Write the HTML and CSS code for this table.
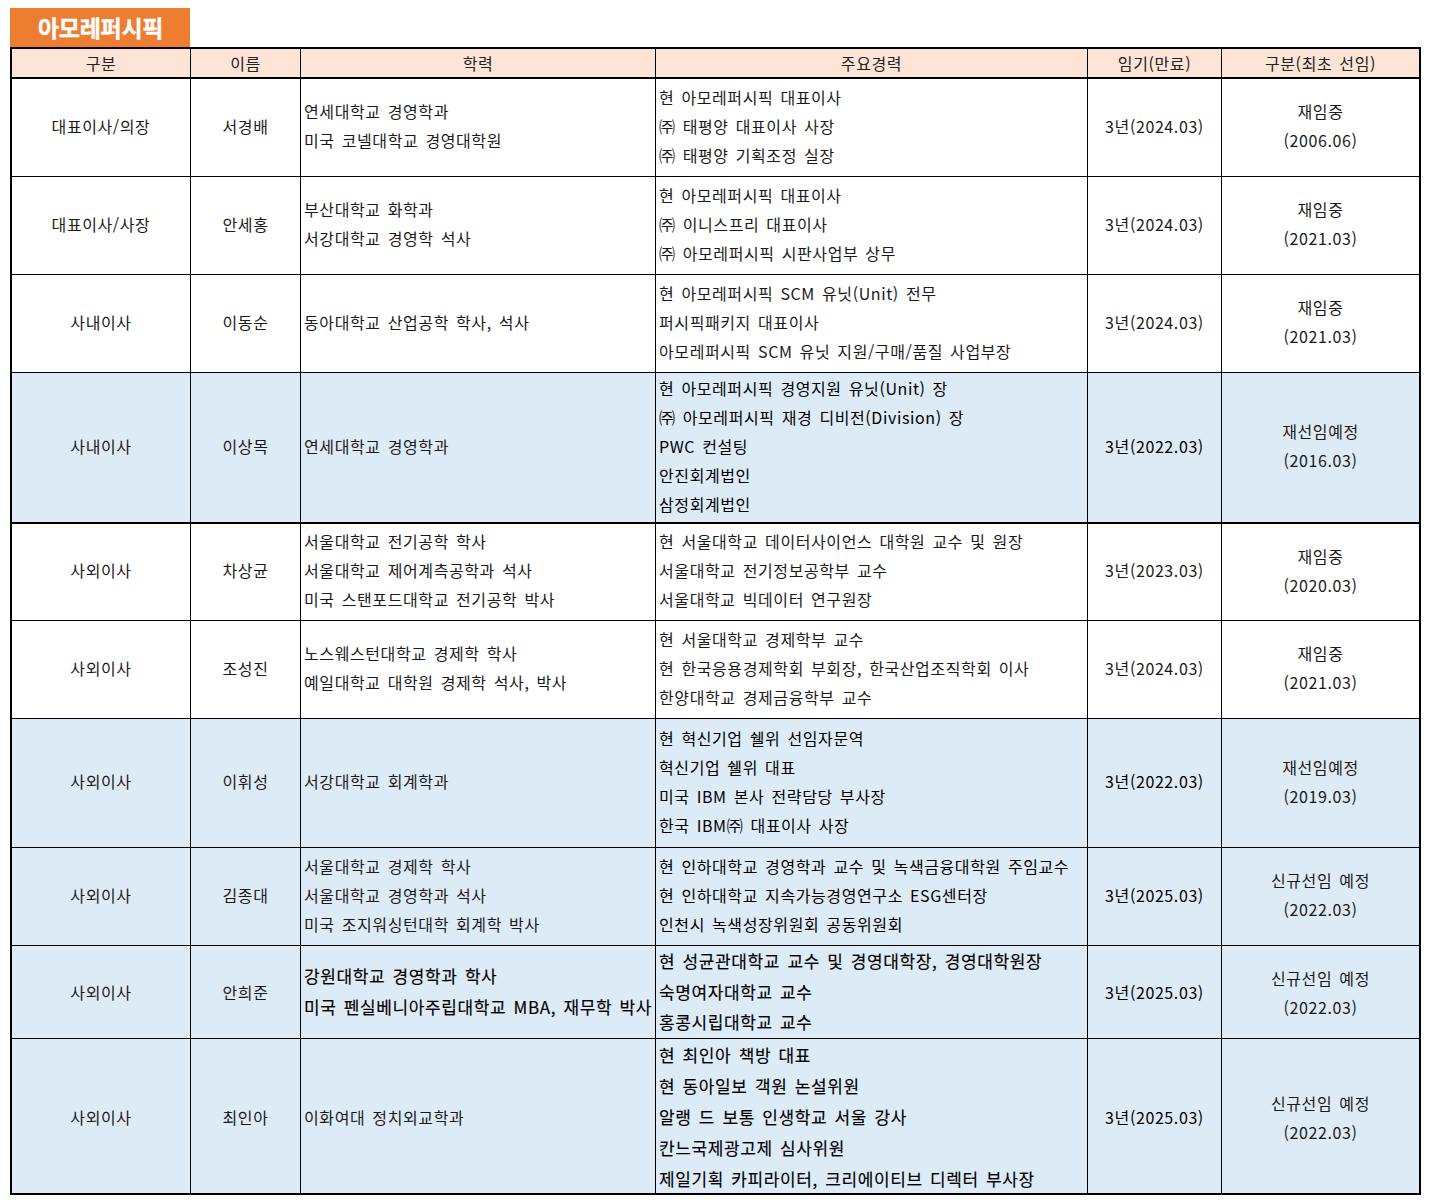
FILE: index.html
```html
<!DOCTYPE html>
<html lang="ko">
<head>
<meta charset="utf-8">
<title>아모레퍼시픽 이사회</title>
<link rel="stylesheet" href="styles.css">
</head>
<body>
<div class="page">
  <div class="title">아모레퍼시픽</div>
  <div class="board">
    <div class="row head">
      <div class="cell c">구분</div>
      <div class="cell c">이름</div>
      <div class="cell c">학력</div>
      <div class="cell c">주요경력</div>
      <div class="cell c">임기(만료)</div>
      <div class="cell c">구분(최초 선임)</div>
    </div>

    <div class="row h98">
      <div class="cell c">대표이사/의장</div>
      <div class="cell c">서경배</div>
      <div class="cell l"><div class="ln">연세대학교 경영학과</div><div class="ln">미국 코넬대학교 경영대학원</div></div>
      <div class="cell l"><div class="ln">현 아모레퍼시픽 대표이사</div><div class="ln">㈜ 태평양 대표이사 사장</div><div class="ln">㈜ 태평양 기획조정 실장</div></div>
      <div class="cell c">3년(2024.03)</div>
      <div class="cell c"><div class="ln">재임중</div><div class="ln">(2006.06)</div></div>
    </div>

    <div class="row h98">
      <div class="cell c">대표이사/사장</div>
      <div class="cell c">안세홍</div>
      <div class="cell l"><div class="ln">부산대학교 화학과</div><div class="ln">서강대학교 경영학 석사</div></div>
      <div class="cell l"><div class="ln">현 아모레퍼시픽 대표이사</div><div class="ln">㈜ 이니스프리 대표이사</div><div class="ln">㈜ 아모레퍼시픽 시판사업부 상무</div></div>
      <div class="cell c">3년(2024.03)</div>
      <div class="cell c"><div class="ln">재임중</div><div class="ln">(2021.03)</div></div>
    </div>

    <div class="row h98">
      <div class="cell c">사내이사</div>
      <div class="cell c">이동순</div>
      <div class="cell l"><div class="ln">동아대학교 산업공학 학사, 석사</div></div>
      <div class="cell l"><div class="ln">현 아모레퍼시픽 SCM 유닛(Unit) 전무</div><div class="ln">퍼시픽패키지 대표이사</div><div class="ln">아모레퍼시픽 SCM 유닛 지원/구매/품질 사업부장</div></div>
      <div class="cell c">3년(2024.03)</div>
      <div class="cell c"><div class="ln">재임중</div><div class="ln">(2021.03)</div></div>
    </div>

    <div class="row blue h151 thick">
      <div class="cell c">사내이사</div>
      <div class="cell c">이상목</div>
      <div class="cell l"><div class="ln">연세대학교 경영학과</div></div>
      <div class="cell l strong"><div class="ln">현 아모레퍼시픽 경영지원 유닛(Unit) 장</div><div class="ln">㈜ 아모레퍼시픽 재경 디비전(Division) 장</div><div class="ln">PWC 컨설팅</div><div class="ln">안진회계법인</div><div class="ln">삼정회계법인</div></div>
      <div class="cell c strong">3년(2022.03)</div>
      <div class="cell c"><div class="ln">재선임예정</div><div class="ln">(2016.03)</div></div>
    </div>

    <div class="row h97">
      <div class="cell c">사외이사</div>
      <div class="cell c">차상균</div>
      <div class="cell l"><div class="ln">서울대학교 전기공학 학사</div><div class="ln">서울대학교 제어계측공학과 석사</div><div class="ln">미국 스탠포드대학교 전기공학 박사</div></div>
      <div class="cell l"><div class="ln">현 서울대학교 데이터사이언스 대학원 교수 및 원장</div><div class="ln">서울대학교 전기정보공학부 교수</div><div class="ln">서울대학교 빅데이터 연구원장</div></div>
      <div class="cell c">3년(2023.03)</div>
      <div class="cell c"><div class="ln">재임중</div><div class="ln">(2020.03)</div></div>
    </div>

    <div class="row h98">
      <div class="cell c">사외이사</div>
      <div class="cell c">조성진</div>
      <div class="cell l"><div class="ln">노스웨스턴대학교 경제학 학사</div><div class="ln">예일대학교 대학원 경제학 석사, 박사</div></div>
      <div class="cell l"><div class="ln">현 서울대학교 경제학부 교수</div><div class="ln">현 한국응용경제학회 부회장, 한국산업조직학회 이사</div><div class="ln">한양대학교 경제금융학부 교수</div></div>
      <div class="cell c">3년(2024.03)</div>
      <div class="cell c"><div class="ln">재임중</div><div class="ln">(2021.03)</div></div>
    </div>

    <div class="row blue h129">
      <div class="cell c">사외이사</div>
      <div class="cell c">이휘성</div>
      <div class="cell l"><div class="ln">서강대학교 회계학과</div></div>
      <div class="cell l strong"><div class="ln">현 혁신기업 쉘위 선임자문역</div><div class="ln">혁신기업 쉘위 대표</div><div class="ln">미국 IBM 본사 전략담당 부사장</div><div class="ln">한국 IBM㈜ 대표이사 사장</div></div>
      <div class="cell c strong">3년(2022.03)</div>
      <div class="cell c"><div class="ln">재선임예정</div><div class="ln">(2019.03)</div></div>
    </div>

    <div class="row blue h98">
      <div class="cell c">사외이사</div>
      <div class="cell c">김종대</div>
      <div class="cell l"><div class="ln">서울대학교 경제학 학사</div><div class="ln">서울대학교 경영학과 석사</div><div class="ln">미국 조지워싱턴대학 회계학 박사</div></div>
      <div class="cell l strong"><div class="ln">현 인하대학교 경영학과 교수 및 녹색금융대학원 주임교수</div><div class="ln">현 인하대학교 지속가능경영연구소 ESG센터장</div><div class="ln">인천시 녹색성장위원회 공동위원회</div></div>
      <div class="cell c strong">3년(2025.03)</div>
      <div class="cell c"><div class="ln">신규선임 예정</div><div class="ln">(2022.03)</div></div>
    </div>

    <div class="row blue h93">
      <div class="cell c">사외이사</div>
      <div class="cell c">안희준</div>
      <div class="cell l big"><div class="ln">강원대학교 경영학과 학사</div><div class="ln">미국 펜실베니아주립대학교 MBA, 재무학 박사</div></div>
      <div class="cell l big"><div class="ln">현 성균관대학교 교수 및 경영대학장, 경영대학원장</div><div class="ln">숙명여자대학교 교수</div><div class="ln">홍콩시립대학교 교수</div></div>
      <div class="cell c strong">3년(2025.03)</div>
      <div class="cell c"><div class="ln">신규선임 예정</div><div class="ln">(2022.03)</div></div>
    </div>

    <div class="row blue h154 last">
      <div class="cell c">사외이사</div>
      <div class="cell c">최인아</div>
      <div class="cell l"><div class="ln">이화여대 정치외교학과</div></div>
      <div class="cell l big tall"><div class="ln">현 최인아 책방 대표</div><div class="ln">현 동아일보 객원 논설위원</div><div class="ln">알랭 드 보통 인생학교 서울 강사</div><div class="ln">칸느국제광고제 심사위원</div><div class="ln">제일기획 카피라이터, 크리에이티브 디렉터 부사장</div></div>
      <div class="cell c strong">3년(2025.03)</div>
      <div class="cell c"><div class="ln">신규선임 예정</div><div class="ln">(2022.03)</div></div>
    </div>
  </div>
</div>
</body>
</html>
```

FILE: styles.css
```css
html, body {
  margin: 0;
  padding: 0;
  background: #ffffff;
}

body {
  font-family: "Noto Sans CJK KR", "Noto Sans", sans-serif;
  color: #1a1a1a;
  font-size: 16px;
}

.page {
  padding: 8px 0 0 10px;
}

.title {
  width: 180px;
  height: 39px;
  box-sizing: border-box;
  background: #ed7d31;
  color: #ffffff;
  font-weight: 700;
  font-size: 23px;
  line-height: 38px;
  padding-left: 28px;
  letter-spacing: -0.3px;
  -webkit-text-stroke: 0.4px #ffffff;
}

.board {
  width: 1411px;
  box-sizing: border-box;
  border: 2px solid #000;
}

.row {
  display: grid;
  grid-template-columns: 179px 110px 355px 432px 134px 197px;
  box-sizing: border-box;
  border-bottom: 1px solid #000;
}

.row.head {
  height: 30px;
  border-bottom: 2px solid #000;
  background: #fce4d6;
}

.row.thick {
  border-bottom: 2px solid #000;
}

.row.last {
  border-bottom: none;
}

.row.blue {
  background: #ddebf7;
}

.h93 { height: 93px; }
.h97 { height: 97px; }
.h98 { height: 98px; }
.h129 { height: 129px; }
.h151 { height: 151px; }
.h154 { height: 154px; }

.cell {
  box-sizing: border-box;
  border-right: 1px solid #000;
  display: flex;
  flex-direction: column;
  justify-content: center;
  white-space: nowrap;
  line-height: 29px;
  letter-spacing: 0.6px;
  word-spacing: 2px;
  padding-bottom: 3px;
}

.cell:last-child {
  border-right: none;
}

.cell.c {
  align-items: center;
  text-align: center;
}

.cell.l {
  align-items: flex-start;
  padding-left: 3px;
}

.head .cell {
  line-height: 28px;
  color: #222;
  padding-bottom: 1px;
}

.ln {
  line-height: 29px;
}

.strong {
  color: #000;
}

.big {
  color: #000;
  font-size: 17px;
  -webkit-text-stroke: 0.15px #000;
  padding-bottom: 5px;
}

.big .ln {
  line-height: 30.5px;
}

.big.tall .ln {
  line-height: 31px;
}
```
